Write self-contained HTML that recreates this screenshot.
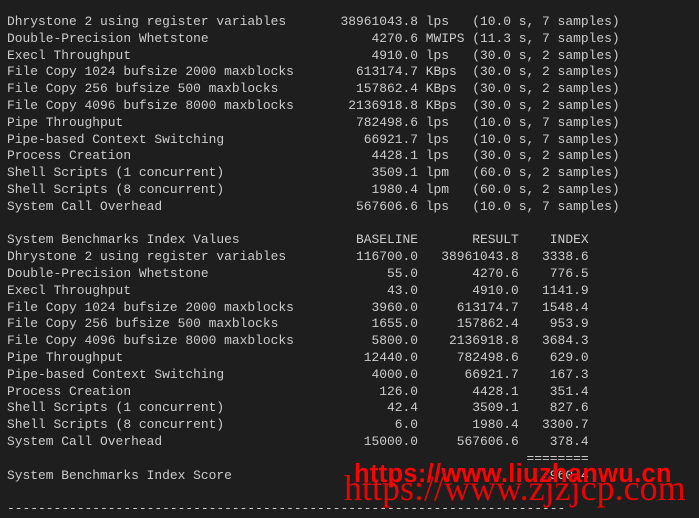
<!DOCTYPE html>
<html><head><meta charset="utf-8"><style>
html,body{margin:0;padding:0;background:#1e1e1e;width:699px;height:512px;overflow:hidden;}
pre{margin:0;position:absolute;left:7px;top:14px;font-family:"Liberation Mono",monospace;font-size:12.93px;line-height:16.8px;color:#cccccc;}
.w1{position:absolute;left:354px;top:460px;font-family:"Liberation Sans",sans-serif;font-weight:bold;font-size:25.5px;color:#ff0000;white-space:nowrap;letter-spacing:0.3px;}
.w2{position:absolute;left:344px;top:467px;font-family:"Liberation Serif",serif;font-size:36px;color:#ff0000;white-space:nowrap;opacity:0.9;}
</style></head><body>
<pre>Dhrystone 2 using register variables       38961043.8 lps   (10.0 s, 7 samples)
Double-Precision Whetstone                     4270.6 MWIPS (11.3 s, 7 samples)
Execl Throughput                               4910.0 lps   (30.0 s, 2 samples)
File Copy 1024 bufsize 2000 maxblocks        613174.7 KBps  (30.0 s, 2 samples)
File Copy 256 bufsize 500 maxblocks          157862.4 KBps  (30.0 s, 2 samples)
File Copy 4096 bufsize 8000 maxblocks       2136918.8 KBps  (30.0 s, 2 samples)
Pipe Throughput                              782498.6 lps   (10.0 s, 7 samples)
Pipe-based Context Switching                  66921.7 lps   (10.0 s, 7 samples)
Process Creation                               4428.1 lps   (30.0 s, 2 samples)
Shell Scripts (1 concurrent)                   3509.1 lpm   (60.0 s, 2 samples)
Shell Scripts (8 concurrent)                   1980.4 lpm   (60.0 s, 2 samples)
System Call Overhead                         567606.6 lps   (10.0 s, 7 samples)

System Benchmarks Index Values               BASELINE       RESULT    INDEX
Dhrystone 2 using register variables         116700.0   38961043.8   3338.6
Double-Precision Whetstone                       55.0       4270.6    776.5
Execl Throughput                                 43.0       4910.0   1141.9
File Copy 1024 bufsize 2000 maxblocks          3960.0     613174.7   1548.4
File Copy 256 bufsize 500 maxblocks            1655.0     157862.4    953.9
File Copy 4096 bufsize 8000 maxblocks          5800.0    2136918.8   3684.3
Pipe Throughput                               12440.0     782498.6    629.0
Pipe-based Context Switching                   4000.0      66921.7    167.3
Process Creation                                126.0       4428.1    351.4
Shell Scripts (1 concurrent)                     42.4       3509.1    827.6
Shell Scripts (8 concurrent)                      6.0       1980.4   3300.7
System Call Overhead                          15000.0     567606.6    378.4
                                                                   ========
System Benchmarks Index Score                                         960.4

------------------------------------------------------------------------</pre>
<div class="w1">https://www.liuzhanwu.cn</div>
<div class="w2">https://www.zjzjcp.com</div>
</body></html>
